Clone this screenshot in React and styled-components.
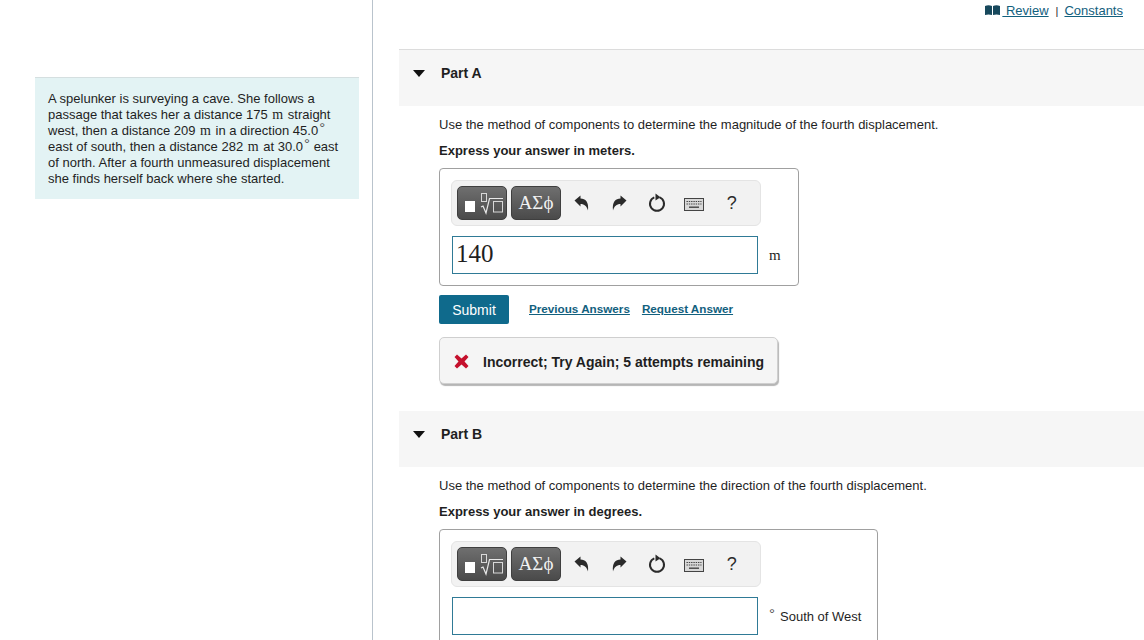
import styled, { createGlobalStyle } from 'styled-components'

const GlobalStyle = createGlobalStyle`
  html, body {
    margin: 0;
    height: 640px;
    overflow: hidden;
    background: #fff;
    font-family: "Liberation Sans", Arial, sans-serif;
    color: #1f1f1f;
  }
`

const Page = styled.div`
  display: grid;
  grid-template-columns: 373px 1fr;
  height: 640px;
  overflow: hidden;
`

const Sidebar = styled.aside`
  border-right: 1px solid #b9c3cc;
  padding: 77px 13px 0 35px;
`

const ProblemCard = styled.div`
  background: #e3f3f4;
  border-top: 1px solid #d5dfe0;
  padding: 13px 13px 12px;
  height: 122px;
  box-sizing: border-box;
  font-size: 13px;
  line-height: 16px;
`

const Unit = styled.span`
  margin: 0 1px;
  font-family: "Liberation Serif", serif;
  font-size: 14px;
  line-height: 0;
`

const Deg = styled.span`
  margin-left: 1px;
  font-size: 15px;
  line-height: 0;
  vertical-align: 2px;
  color: #555;
`

const Main = styled.main`
  padding-left: 26px;
  min-width: 0;
`

const TopLinks = styled.div`
  display: flex;
  justify-content: flex-end;
  align-items: center;
  height: 49px;
  padding: 0 21px 28px 0;
  box-sizing: border-box;
  font-size: 13px;
`

const TopLink = styled.a`
  color: #12607e;
  text-decoration: underline;
  white-space: pre;
`

const Divider = styled.span`
  margin: 0 6px 0 7px;
  font-size: 11px;
`

const PartHeader = styled.div`
  display: flex;
  align-items: center;
  height: 56px;
  box-sizing: content-box;
  background: #f6f6f6;
  border-top: ${({ $first }) => ($first ? '1px solid #dcdcdc' : 'none')};
  padding-left: 14px;
  font-size: 14px;
  font-weight: bold;
`

const HeaderInner = styled.div`
  display: flex;
  align-items: center;
  margin-top: -10px;
`

const Caret = styled.span`
  width: 0;
  height: 0;
  border-left: 6px solid transparent;
  border-right: 6px solid transparent;
  border-top: 7px solid #111;
  margin-right: 16px;
`

const PartBody = styled.section`
  padding: 0 0 0 40px;
`

const Prompt = styled.p`
  margin: 0;
  padding-top: 11px;
  font-size: 13px;
  line-height: 16px;
`

const Instruction = styled(Prompt)`
  padding-top: 10px;
  font-weight: bold;
`

const AnswerBox = styled.div`
  width: ${({ $w }) => $w}px;
  height: ${({ $h }) => $h}px;
  box-sizing: border-box;
  margin-top: 9px;
  padding: 11px 11px 0;
  border: 1px solid #a0a0a0;
  border-radius: 4px;
`

const Toolbar = styled.div`
  display: flex;
  align-items: center;
  width: 310px;
  height: 46px;
  box-sizing: border-box;
  padding: 0 5px;
  background: #f2f2f2;
  border: 1px solid #e4e4e4;
  border-radius: 6px;
`

const DarkButton = styled.div`
  display: flex;
  align-items: center;
  justify-content: center;
  flex: none;
  width: 50px;
  height: 34px;
  border-radius: 5px;
  border: 1px solid #3f3f3f;
  box-sizing: border-box;
  background: linear-gradient(#6f6f6f, #4a4a4a);
  color: #f1f1f1;
  font-family: "Liberation Serif", serif;
  font-size: 19px;

  & + & {
    margin-left: 4px;
  }
`

const ToolIcons = styled.div`
  display: flex;
  margin-left: 2px;
`

const ToolIcon = styled.div`
  display: flex;
  align-items: center;
  justify-content: center;
  flex: none;
  width: 37.5px;
  color: #2b2b2b;
  font-size: 18px;
`

const InputRow = styled.div`
  display: flex;
  align-items: center;
  margin-top: 10px;
`

const AnswerInput = styled.div`
  width: 306px;
  height: 38px;
  box-sizing: border-box;
  flex: none;
  margin-left: 1px;
  padding-left: 3px;
  border: 1px solid #2f7a96;
  font-family: "Liberation Serif", serif;
  font-size: 25px;
  line-height: 33px;
`

const UnitLabel = styled.span`
  margin-left: 11px;
  font-family: "Liberation Serif", serif;
  font-size: 15px;
`

const DegLabel = styled.span`
  margin-left: 10px;
  font-size: 13px;
`

const DegText = styled.span`
  margin-left: 5px;
`

const Actions = styled.div`
  display: flex;
  align-items: center;
  margin-top: 9px;
  height: 29px;
`

const SubmitButton = styled.button`
  width: 70px;
  height: 29px;
  padding: 0;
  border: none;
  border-radius: 2px;
  background: #0f6a8c;
  color: #fff;
  font-family: inherit;
  font-size: 14px;
  margin-right: 20px;
`

const ActionLink = styled.a`
  color: #12607e;
  font-size: 11.7px;
  font-weight: bold;
  text-decoration: underline;
  margin: 0 12px 2px 0;
`

const Feedback = styled.div`
  display: flex;
  align-items: center;
  width: 339px;
  height: 47px;
  box-sizing: border-box;
  margin: 13px 0 27px;
  padding: 2px 0 0 14px;
  background: #f5f5f5;
  border: 1px solid #cfcfcf;
  border-radius: 5px;
  box-shadow: 1px 2px 1px #b5b5b5;
  font-size: 14px;
  font-weight: bold;
`

const Cross = styled.svg`
  width: 15px;
  height: 15px;
  margin-right: 14px;
  flex: none;
`

const Book = styled.svg`
  margin: -1px 2px 0 0;
`

const Keys = styled.svg`
  margin-top: 3px;
`

const BookIcon = () => (
  <Book width="15" height="10" viewBox="0 0 15 10">
    <path d="M0 1 Q3.5 -.3 7 1 V10 Q3.5 8.8 0 10Z M8 1 Q11.5 -.3 15 1 V10 Q11.5 8.8 8 10Z" fill="#17485c" />
  </Book>
)

const TemplateIcon = () => (
  <svg width="48" height="32" viewBox="0 0 48 32">
    <rect x="7" y="14" width="10" height="11" fill="#fff" />
    <rect x="23.5" y="6.5" width="5" height="8" fill="none" stroke="#d8d8d8" />
    <path d="M23 20 L25 19 L28 26 L31.5 11.5 H45" fill="none" stroke="#e8e8e8" strokeWidth="1.2" />
    <rect x="35.5" y="14.5" width="9" height="10.5" fill="none" stroke="#d8d8d8" />
  </svg>
)

const UndoIcon = ({ flip }) => (
  <svg width="15" height="16" viewBox="0 0 15 16" style={flip ? { transform: 'scaleX(-1)' } : undefined}>
    <path d="M0.5 5.5 L6.5 0.5 V3.5 C11.5 3.5 15 7 14 15.5 C12.8 11.2 10.5 9 6.5 9 V11.5Z" fill="#2b2b2b" />
  </svg>
)

const ResetIcon = () => (
  <svg width="18" height="20" viewBox="0 0 18 20">
    <path d="M6.3 4.3 A7 7 0 1 0 11.7 4.3" fill="none" stroke="#2b2b2b" strokeWidth="2" />
    <path d="M7.5 0.5 L12.5 4.2 L7.5 7.5Z" fill="#2b2b2b" />
  </svg>
)

const KeyboardIcon = () => (
  <Keys width="20" height="13" viewBox="0 0 20 13">
    <rect x=".5" y=".5" width="19" height="12" fill="#d8d8d8" stroke="#444" />
    <path d="M2.5 3.5h15M2.5 6h15" stroke="#444" strokeWidth="1.2" strokeDasharray="1.4 .9" />
    <path d="M5 9.2h10" stroke="#444" strokeWidth="1.4" />
  </Keys>
)

const EditorToolbar = () => (
  <Toolbar>
    <DarkButton><TemplateIcon /></DarkButton>
    <DarkButton>ΑΣϕ</DarkButton>
    <ToolIcons>
      <ToolIcon><UndoIcon /></ToolIcon>
      <ToolIcon><UndoIcon flip /></ToolIcon>
      <ToolIcon><ResetIcon /></ToolIcon>
      <ToolIcon><KeyboardIcon /></ToolIcon>
      <ToolIcon>?</ToolIcon>
    </ToolIcons>
  </Toolbar>
)

export default function App() {
  return (
    <Page>
      <GlobalStyle />
      <Sidebar>
        <ProblemCard>
          A spelunker is surveying a cave. She follows a passage that takes her a distance 175 <Unit>m</Unit> straight
          west, then a distance 209 <Unit>m</Unit> in a direction 45.0<Deg>°</Deg> east of south, then a distance
          282 <Unit>m</Unit> at 30.0<Deg>°</Deg> east of north. After a fourth unmeasured displacement she finds
          herself back where she started.
        </ProblemCard>
      </Sidebar>
      <Main>
        <TopLinks>
          <BookIcon />
          <TopLink href="#"> Review</TopLink>
          <Divider>|</Divider>
          <TopLink href="#">Constants</TopLink>
        </TopLinks>

        <PartHeader $first><HeaderInner><Caret />Part A</HeaderInner></PartHeader>
        <PartBody>
          <Prompt>Use the method of components to determine the magnitude of the fourth displacement.</Prompt>
          <Instruction>Express your answer in meters.</Instruction>
          <AnswerBox $w={360} $h={118}>
            <EditorToolbar />
            <InputRow>
              <AnswerInput>140</AnswerInput>
              <UnitLabel>m</UnitLabel>
            </InputRow>
          </AnswerBox>
          <Actions>
            <SubmitButton>Submit</SubmitButton>
            <ActionLink href="#">Previous Answers</ActionLink>
            <ActionLink href="#">Request Answer</ActionLink>
          </Actions>
          <Feedback>
            <Cross viewBox="0 0 15 15">
              <path d="M3 .5 L7.5 4.5 L12 .5 L14.5 3 L10.5 7.5 L14.5 12 L12 14.5 L7.5 10.5 L3 14.5 L.5 12 L4.5 7.5 L.5 3Z" fill="#c5112d" />
            </Cross>
            Incorrect; Try Again; 5 attempts remaining
          </Feedback>
        </PartBody>

        <PartHeader><HeaderInner><Caret />Part B</HeaderInner></PartHeader>
        <PartBody>
          <Prompt>Use the method of components to determine the direction of the fourth displacement.</Prompt>
          <Instruction>Express your answer in degrees.</Instruction>
          <AnswerBox $w={439} $h={140}>
            <EditorToolbar />
            <InputRow>
              <AnswerInput />
              <DegLabel><Deg>°</Deg><DegText>South of West</DegText></DegLabel>
            </InputRow>
          </AnswerBox>
        </PartBody>
      </Main>
    </Page>
  )
}
